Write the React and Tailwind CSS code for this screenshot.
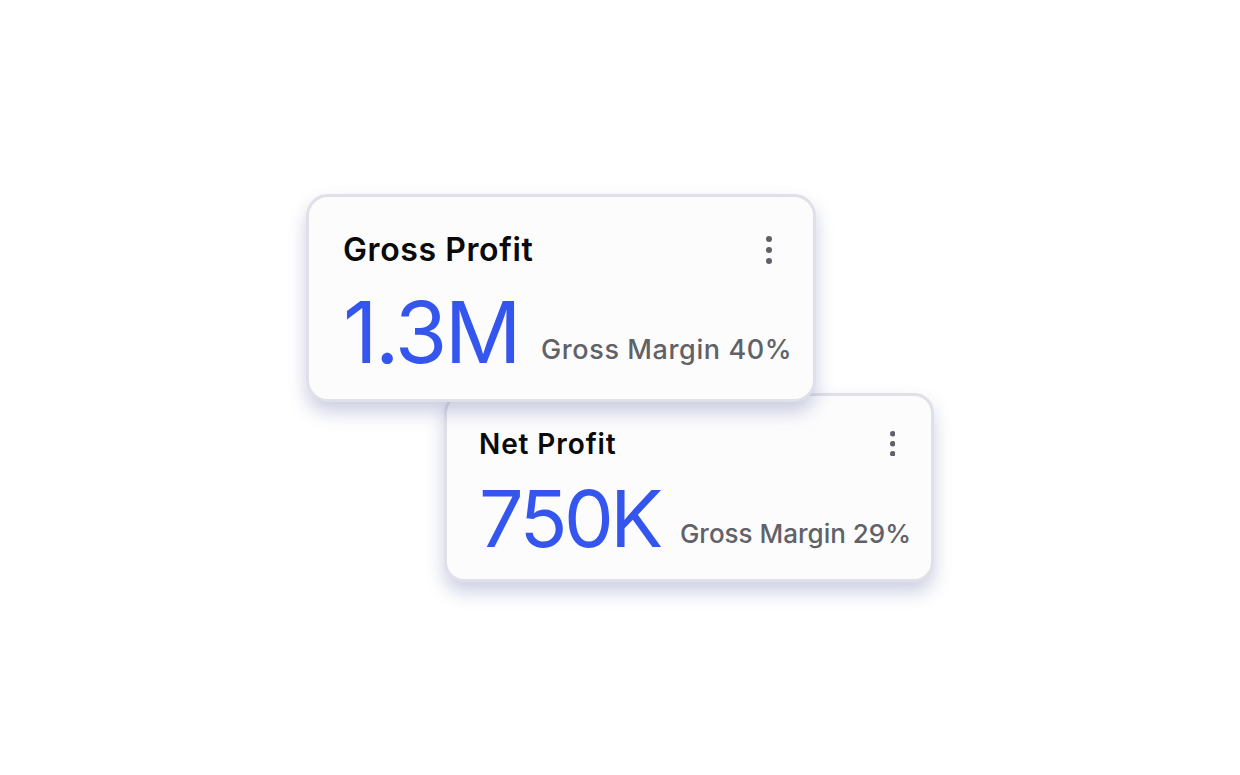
function Dots({ size = 6, gap = 5 }) {
  const h = size * 3 + gap * 2
  return (
    <svg width={size} height={h} viewBox={`0 0 ${size} ${h}`} className="text-[#5f6068]">
      <circle cx={size / 2} cy={size / 2} r={size / 2} fill="currentColor" />
      <circle cx={size / 2} cy={h / 2} r={size / 2} fill="currentColor" />
      <circle cx={size / 2} cy={h - size / 2} r={size / 2} fill="currentColor" />
    </svg>
  )
}

export default function App() {
  return (
    <div className="h-screen w-full bg-white flex items-center justify-center font-['Inter',sans-serif]">
      <div className="flex flex-col items-start">
        {/* Gross profit card */}
        <div className="relative z-10 w-[510px] h-[208px] rounded-[22px] border-[3px] border-[#dfe0e8] bg-[#fcfcfd] shadow-[0_10px_18px_rgba(95,105,165,0.32)] pl-[34px] pr-[41px] pt-[37px]">
          <div className="flex items-start justify-between">
            <h2 className="whitespace-nowrap text-[32px] leading-none font-semibold text-[#0a0a0a] tracking-[0.6px]">Gross Profit</h2>
            <div className="pt-[2px]">
              <Dots size={6} gap={5} />
            </div>
          </div>
          <div className="mt-[24px] flex items-end gap-[22px]">
            <span className="whitespace-nowrap text-[85px] leading-none font-normal text-[#3456ef] tracking-[-2.5px]">1.3M</span>
            <span className="whitespace-nowrap pb-[12px] text-[27px] leading-none font-medium text-[#616168] tracking-[0.6px]">Gross Margin 40%</span>
          </div>
        </div>

        {/* Net profit card */}
        <div className="ml-[138px] -mt-[9px] w-[490px] h-[189px] rounded-[20px] border-[3px] border-[#dfe0e8] bg-[#fcfcfd] shadow-[0_10px_18px_rgba(95,105,165,0.32)] pl-[32px] pr-[36px] pt-[34px]">
          <div className="flex items-start justify-between">
            <h2 className="whitespace-nowrap text-[28px] leading-none font-semibold text-[#0a0a0a] tracking-[0.9px]">Net Profit</h2>
            <div className="pt-[1px]">
              <Dots size={5.5} gap={4.5} />
            </div>
          </div>
          <div className="mt-[21px] flex items-end gap-[20px]">
            <span className="whitespace-nowrap text-[79px] leading-none font-normal text-[#3456ef] tracking-[-3.5px]">750K</span>
            <span className="whitespace-nowrap pb-[11px] text-[26px] leading-none font-medium text-[#616168] tracking-[0px]">Gross Margin 29%</span>
          </div>
        </div>
      </div>
    </div>
  )
}
